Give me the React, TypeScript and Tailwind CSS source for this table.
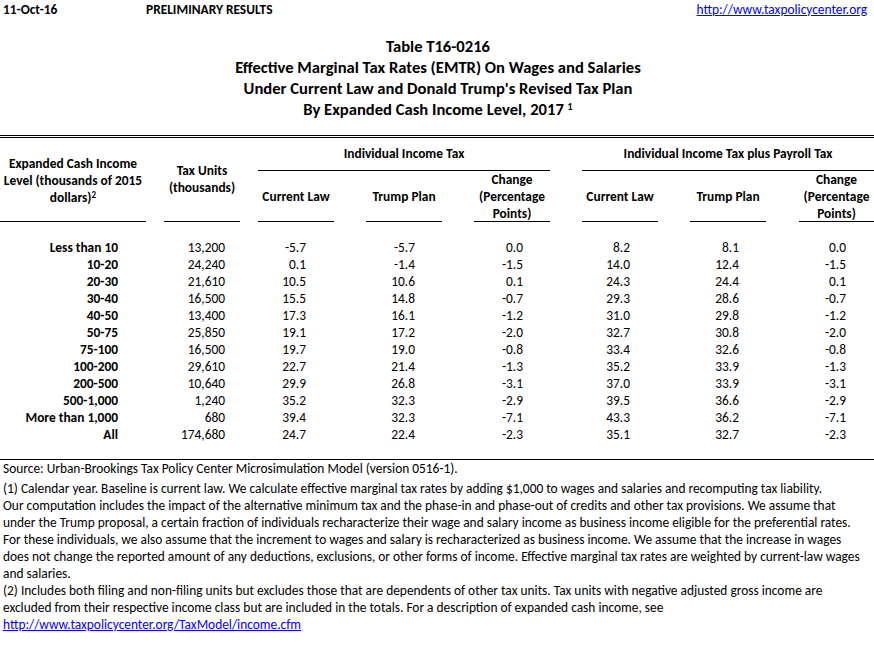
import * as React from "react";

const cols =
  "grid grid-cols-[146px_18px_76px_18px_76px_32px_76px_32px_76px_32px_76px_32px_76px_33px_75px]";

const rows: [string, string, string, string, string, string, string, string][] = [
  ["Less than 10", "13,200", "-5.7", "-5.7", "0.0", "8.2", "8.1", "0.0"],
  ["10-20", "24,240", "0.1", "-1.4", "-1.5", "14.0", "12.4", "-1.5"],
  ["20-30", "21,610", "10.5", "10.6", "0.1", "24.3", "24.4", "0.1"],
  ["30-40", "16,500", "15.5", "14.8", "-0.7", "29.3", "28.6", "-0.7"],
  ["40-50", "13,400", "17.3", "16.1", "-1.2", "31.0", "29.8", "-1.2"],
  ["50-75", "25,850", "19.1", "17.2", "-2.0", "32.7", "30.8", "-2.0"],
  ["75-100", "16,500", "19.7", "19.0", "-0.8", "33.4", "32.6", "-0.8"],
  ["100-200", "29,610", "22.7", "21.4", "-1.3", "35.2", "33.9", "-1.3"],
  ["200-500", "10,640", "29.9", "26.8", "-3.1", "37.0", "33.9", "-3.1"],
  ["500-1,000", "1,240", "35.2", "32.3", "-2.9", "39.5", "36.6", "-2.9"],
  ["More than 1,000", "680", "39.4", "32.3", "-7.1", "43.3", "36.2", "-7.1"],
  ["All", "174,680", "24.7", "22.4", "-2.3", "35.1", "32.7", "-2.3"],
];

const notes = [
  "(1) Calendar year. Baseline is current law. We calculate effective marginal tax rates by adding $1,000 to wages and salaries and recomputing tax liability.",
  "Our computation includes the impact of the alternative minimum tax and the phase-in and phase-out of credits and other tax provisions. We assume that",
  "under the Trump proposal, a certain fraction of individuals recharacterize their wage and salary income as business income eligible for the preferential rates.",
  "For these individuals, we also assume that the increment to wages and salary is recharacterized as business income. We assume that the increase in wages",
  "does not change the reported amount of any deductions, exclusions, or other forms of income. Effective marginal tax rates are weighted by current-law wages",
  "and salaries.",
  "(2) Includes both filing and non-filing units but excludes those that are dependents of other tax units. Tax units with negative adjusted gross income are",
  "excluded from their respective income class but are included in the totals. For a description of expanded cash income, see",
];

function SubHead({ col, children }: { col: string; children: React.ReactNode }) {
  return (
    <div className={`${col} row-start-2 flex items-center justify-center border-b border-black text-center leading-[17px]`}>
      <div>{children}</div>
    </div>
  );
}

export default function App() {
  return (
    <div className="h-[650px] w-[874px] overflow-hidden bg-white font-['Carlito','Lato',sans-serif] text-[13.4px] text-black">
      <div className="flex h-[20px] items-center font-bold">
        <span className="w-[146px] pl-[3px]">11-Oct-16</span>
        <span>PRELIMINARY RESULTS</span>
        <a className="ml-auto pr-[7px] font-normal text-[#0000ff] underline">http://www.taxpolicycenter.org</a>
      </div>

      <div className="mt-[16px] pl-[2px] text-center text-[16.6px] font-bold leading-[21px]">
        <div>Table T16-0216</div>
        <div>Effective Marginal Tax Rates (EMTR) On Wages and Salaries</div>
        <div>Under Current Law and Donald Trump's Revised Tax Plan</div>
        <div>
          By Expanded Cash Income Level, 2017 <sup className="text-[10px]">1</sup>
        </div>
      </div>

      <div className="mt-[15px] h-[3px] border-y border-black" />

      <div className={`${cols} grid-rows-[33px_51px] font-bold`}>
        <div className="col-start-1 row-span-2 row-start-1 flex items-center justify-center border-b border-black text-center leading-[17px]">
          <div className="pt-[2px]">
            Expanded Cash Income
            <br />
            Level (thousands of 2015
            <br />
            dollars)<sup className="text-[9px]">2</sup>
          </div>
        </div>
        <div className="col-start-3 row-span-2 row-start-1 flex items-center justify-center border-b border-black text-center leading-[17px]">
          <div className="pb-[2px]">
            Tax Units
            <br />
            (thousands)
          </div>
        </div>
        <div className="col-start-5 col-end-10 row-start-1 flex items-center justify-center border-b border-black">
          Individual Income Tax
        </div>
        <div className="col-start-11 col-end-16 row-start-1 flex items-center justify-center border-b border-black">
          Individual Income Tax plus Payroll Tax
        </div>
        <SubHead col="col-start-5">Current Law</SubHead>
        <SubHead col="col-start-7">Trump Plan</SubHead>
        <SubHead col="col-start-9">
          Change
          <br />
          (Percentage
          <br />
          Points)
        </SubHead>
        <SubHead col="col-start-11">Current Law</SubHead>
        <SubHead col="col-start-13">Trump Plan</SubHead>
        <SubHead col="col-start-15">
          Change
          <br />
          (Percentage
          <br />
          Points)
        </SubHead>
      </div>

      <div className="mt-[17px]">
        {rows.map((r) => (
          <div key={r[0]} className={`${cols} h-[17px] items-center leading-[17px]`}>
            <div className="col-start-1 pr-[28px] text-right font-bold">{r[0]}</div>
            <div className="col-start-3 pr-[15px] text-right">{r[1]}</div>
            <div className="col-start-5 pr-[28px] text-right">{r[2]}</div>
            <div className="col-start-7 pr-[27px] text-right">{r[3]}</div>
            <div className="col-start-9 pr-[27px] text-right">{r[4]}</div>
            <div className="col-start-11 pr-[28px] text-right">{r[5]}</div>
            <div className="col-start-13 pr-[27px] text-right">{r[6]}</div>
            <div className="col-start-15 pr-[28px] text-right">{r[7]}</div>
          </div>
        ))}
      </div>

      <div className="mt-[16px] border-t border-black pl-[3px] leading-[17px]">
        <div>Source: Urban-Brookings Tax Policy Center Microsimulation Model (version 0516-1).</div>
        <div className="mt-[3px] whitespace-nowrap">
          {notes.map((n) => (
            <div key={n}>{n}</div>
          ))}
          <a className="text-[#0000ff] underline">http://www.taxpolicycenter.org/TaxModel/income.cfm</a>
        </div>
      </div>
    </div>
  );
}
